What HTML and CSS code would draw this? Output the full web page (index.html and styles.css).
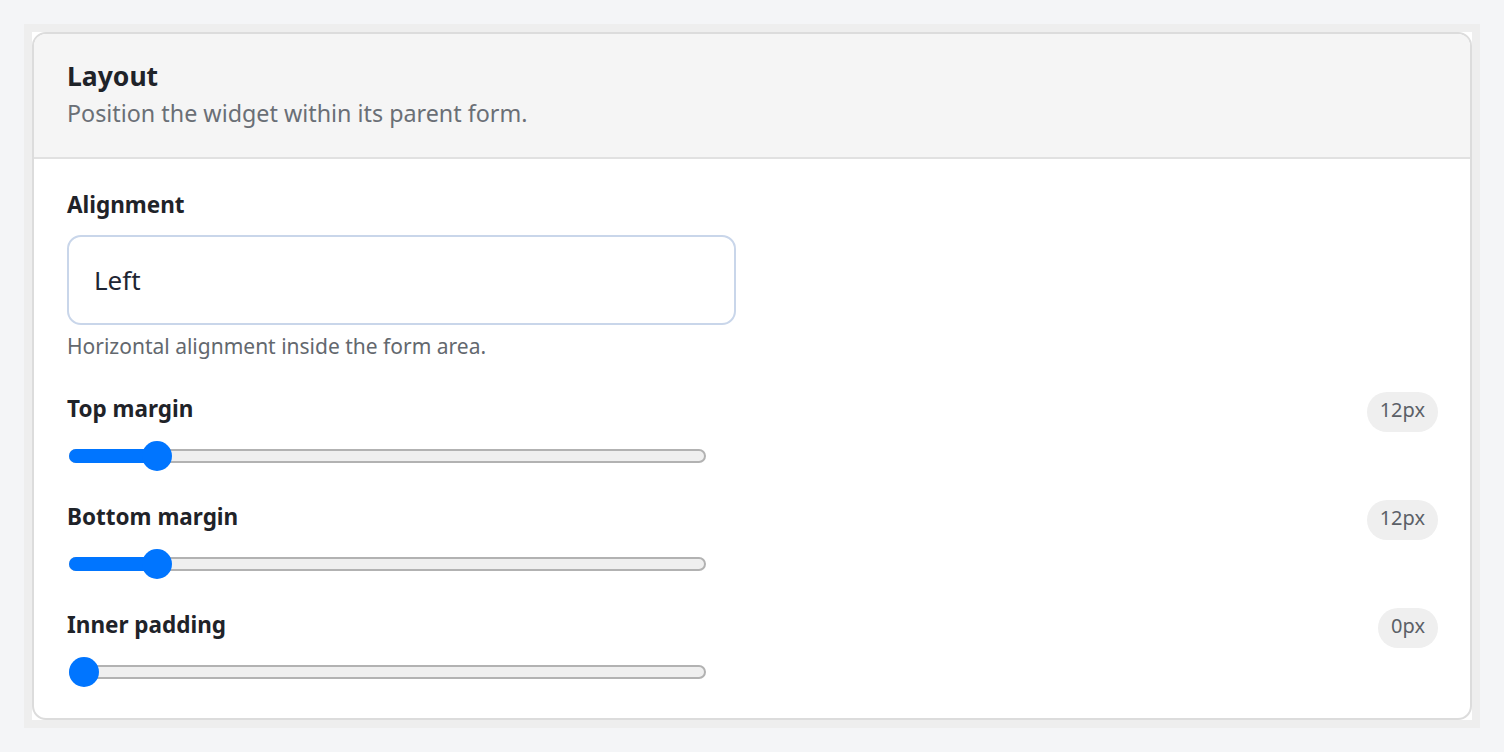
FILE: index.html
```html
<!DOCTYPE html>
<html lang="en">
<head>
<meta charset="utf-8">
<title>Layout</title>
<link rel="stylesheet" href="styles.css">
</head>
<body>
<div class="frame">
  <div class="surface">
    <section class="card">
      <header class="card-header">
        <h2 class="card-title">Layout</h2>
        <p class="card-subtitle">Position the widget within its parent form.</p>
      </header>
      <div class="card-body">
        <div class="field">
          <div class="field-label">Alignment</div>
          <div class="select-box">Left</div>
          <div class="field-help">Horizontal alignment inside the form area.</div>
        </div>

        <div class="range-group">
          <div class="range-head">
            <div class="field-label">Top margin</div>
            <span class="badge">12px</span>
          </div>
          <div class="range">
            <div class="range-track"></div>
            <div class="range-fill" style="width: 87.8px"></div>
            <div class="range-thumb" style="left: 72.8px"></div>
          </div>
        </div>

        <div class="range-group">
          <div class="range-head">
            <div class="field-label">Bottom margin</div>
            <span class="badge">12px</span>
          </div>
          <div class="range">
            <div class="range-track"></div>
            <div class="range-fill" style="width: 87.8px"></div>
            <div class="range-thumb" style="left: 72.8px"></div>
          </div>
        </div>

        <div class="range-group">
          <div class="range-head">
            <div class="field-label">Inner padding</div>
            <span class="badge">0px</span>
          </div>
          <div class="range">
            <div class="range-track"></div>
            <div class="range-thumb" style="left: 0px"></div>
          </div>
        </div>
      </div>
    </section>
  </div>
</div>
</body>
</html>
```

FILE: styles.css
```css
* {
  box-sizing: border-box;
}

html, body {
  margin: 0;
  padding: 0;
}

body {
  background: #f4f5f7;
  padding: 24px;
  font-family: "Noto Sans", "Open Sans", sans-serif;
  color: #1f2329;
}

.frame {
  background: #eeeeee;
  padding: 8px;
}

.surface {
  background: #ffffff;
}

.card {
  border: 2px solid #dcdcdc;
  border-radius: 14px;
  overflow: hidden;
  background: #ffffff;
}

.card-header {
  background: #f5f5f5;
  border-bottom: 2px solid #e1e1e1;
  padding: 25px 33px 29px;
}

.card-title {
  margin: 0;
  font-size: 26.5px;
  line-height: 34px;
  font-weight: 700;
  color: #1f2329;
}

.card-subtitle {
  margin: 5px 0 0;
  font-size: 23.3px;
  line-height: 30px;
  color: #6a6f76;
}

.card-body {
  padding: 31px 32px 31px 33px;
  display: flex;
  flex-direction: column;
  gap: 29px;
}

.field {
  display: flex;
  flex-direction: column;
}

.field-label {
  font-size: 22.5px;
  line-height: 30px;
  font-weight: 700;
  color: #1f2329;
}

.select-box {
  margin-top: 15px;
  width: 669px;
  height: 90px;
  border: 2px solid #c9d6ea;
  border-radius: 14px;
  padding: 0 25px;
  display: flex;
  align-items: center;
  font-size: 26px;
  color: #1e2533;
  background: #ffffff;
}

.field-help {
  margin-top: 6px;
  font-size: 21px;
  line-height: 30px;
  color: #63686e;
}

.field + .range-group {
  margin-top: 2px;
}

.range-group {
  display: flex;
  flex-direction: column;
  gap: 9px;
}

.range-head {
  display: flex;
  justify-content: space-between;
  align-items: flex-start;
  height: 40px;
}

.range-head .field-label {
  margin-top: 2px;
}

.badge {
  display: inline-block;
  background: #efefef;
  color: #5b6067;
  border-radius: 20px;
  font-size: 20px;
  line-height: 28px;
  padding: 4px 13px 8px;
}

.range {
  position: relative;
  margin-left: 2px;
  width: 637px;
  height: 30px;
}

.range-track {
  margin-top: 8px;
  height: 14px;
  border: 2px solid #b2b2b2;
  border-radius: 7px;
  background: #efefef;
}

.range-fill {
  position: absolute;
  left: 0;
  top: 8px;
  height: 14px;
  border-radius: 7px 0 0 7px;
  background: #0075ff;
}

.range-thumb {
  position: absolute;
  top: 0;
  width: 30px;
  height: 30px;
  border-radius: 50%;
  background: #0075ff;
}
```
